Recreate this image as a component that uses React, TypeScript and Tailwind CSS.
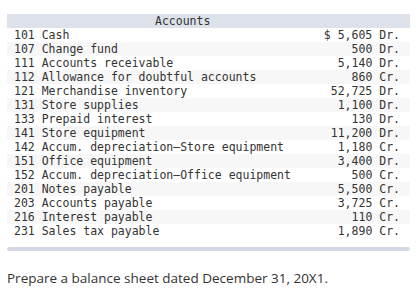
import React from "react";

const rows: [string, string][] = [
  ["101 Cash", "$ 5,605 Dr."],
  ["107 Change fund", "500 Dr."],
  ["111 Accounts receivable", "5,140 Dr."],
  ["112 Allowance for doubtful accounts", "860 Cr."],
  ["121 Merchandise inventory", "52,725 Dr."],
  ["131 Store supplies", "1,100 Dr."],
  ["133 Prepaid interest", "130 Dr."],
  ["141 Store equipment", "11,200 Dr."],
  ["142 Accum. depreciation\u2013Store equipment", "1,180 Cr."],
  ["151 Office equipment", "3,400 Dr."],
  ["152 Accum. depreciation\u2013Office equipment", "500 Cr."],
  ["201 Notes payable", "5,500 Cr."],
  ["203 Accounts payable", "3,725 Cr."],
  ["216 Interest payable", "110 Cr."],
  ["231 Sales tax payable", "1,890 Cr."],
];

export default function App() {
  return (
    <div className="w-[416px] h-[301px] bg-white overflow-hidden">
      <div className="pt-[14px] pl-[7px] pr-[6px]">
        <div
          className="text-[11.5px] text-[#333] leading-[14px]"
          style={{ fontFamily: '"DejaVu Sans Mono", monospace' }}
        >
          <div className="bg-[#dde1ea] h-[14px] pl-[148px]">Accounts</div>
          <div>
            {rows.map(([a, b], i) => (
              <div
                key={a}
                className={`flex justify-between h-[14px] pl-[7px] pr-[10px] whitespace-pre ${
                  i % 2 === 1 ? "bg-[#f7f7f7]" : "bg-white"
                }`}
              >
                <span>{a}</span>
                <span>{b}</span>
              </div>
            ))}
          </div>
          <div className="mt-[9px] h-[4px] rounded-full bg-[#d3d8e3]" />
        </div>
      </div>
      <div
        className="pl-[7px] mt-[17px] text-[13.5px] text-[#333]"
        style={{ fontFamily: '"Open Sans", sans-serif' }}
      >
        Prepare a balance sheet dated December 31, 20X1.
      </div>
    </div>
  );
}
